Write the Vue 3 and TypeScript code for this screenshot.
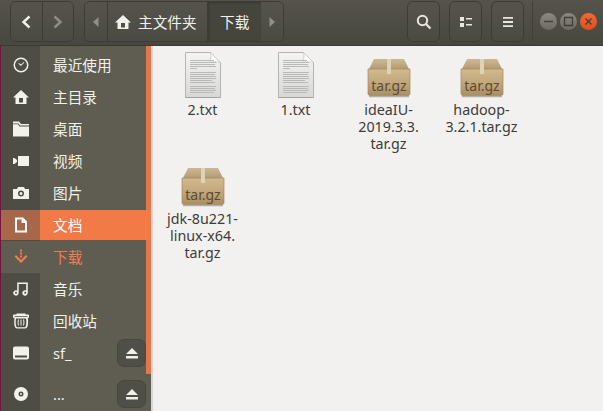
<script setup lang="ts">
interface Place {
  label: string
  icon: string
  state?: 'active' | 'current'
  eject?: boolean
  gap?: boolean
}

interface FileItem {
  kind: 'text' | 'archive'
  lines: string[]
}

const icons: Record<string, string> = {
  clock: 'M8 .5a7.5 7.5 0 1 0 0 15a7.5 7.5 0 0 0 0-15zM8 2a6 6 0 1 1 0 12a6 6 0 0 1 0-12zM8 8.900l3.400-3.300-.6-.6-2.600 2.400-2.400-1.300-.4.7z',
  home: 'M8 1L0 8.500h2.500V15h11V8.500H16zM6 9h4v4.500H6z',
  folder: 'M0 .5h6L8 3h8v1.500H7L5.500 2.500H0zM0 3.200h5L6.500 5.500H16V15.500H0z',
  video: 'M5 3h11v10H5zM0 5h1.500L4 7v2l-2.500 2H0z',
  camera: 'M5 2L4 4H0v10h16V4h-4l-1-2zM8 5.500a3 3 0 1 0 0 6a3 3 0 0 0 0-6zM8 7a1.500 1.500 0 1 1 0 3a1.500 1.500 0 0 1 0-3z',
  doc: 'M2 .5h8l4 4v11H2zM4 2.500v11h8V6H8.500V2.500z',
  down: 'M7 .5h2v2H7zM7 3.500h2v2H7zM7 6.500h2v2H7zM1.500 7.500L3 6l5 5 5-5 1.500 1.500L8 14z',
  music: 'M4.200 1.500h10.600V12h-.1a2.700 2.700 0 1 1-1.500-2.400V3H5.700v9h-.1a2.700 2.700 0 1 1-1.400-2.400zM3 10.800a1 1 0 1 0 0 2a1 1 0 0 0 0-2zM12.200 10.800a1 1 0 1 0 0 2a1 1 0 0 0 0-2z',
  trash: 'M3.500 .5h9v1H15a1 1 0 0 1 1 1v1.500a1 1 0 0 1-1 1h-.2c.2 1 .3 2.500.3 4 0 2-.3 4-.8 5-.3.7-1 1.500-2 1.500H4c-1 0-1.700-.8-2-1.500-.5-1-.8-3-.8-5 0-1.500.1-3 .3-4H1a1 1 0 0 1-1-1V2.500a1 1 0 0 1 1-1h2.500zM1.500 3v.8h13V3zM3 5.500c-.2 1-.3 2.500-.3 3.700 0 2 .3 3.500.7 4.400.2.400.4.6.7.6h7.800c.3 0 .5-.2.700-.6.4-.9.700-2.400.7-4.400 0-1.200-.1-2.700-.3-3.700zM5 6.500c-.3 1-.4 2-.4 3s.1 2 .4 3h1c-.3-1-.4-2-.4-3s.1-2 .4-3zM7.500 6.500v6h1v-6zM10 6.500c.3 1 .4 2 .4 3s-.1 2-.4 3h1c.3-1 .4-2 .4-3s-.1-2-.4-3z',
  drive: 'M2 1.500h12a2 2 0 0 1 2 2v9a2 2 0 0 1-2 2H2a2 2 0 0 1-2-2v-9a2 2 0 0 1 2-2zM2 10.500v2h12v-2z',
  disc: 'M8 1a7 7 0 1 0 0 14A7 7 0 0 0 8 1zM8 5.500a2.500 2.500 0 1 1 0 5a2.500 2.500 0 0 1 0-5zM8 7a1 1 0 1 0 0 2a1 1 0 0 0 0-2z',
}

const places: Place[] = [
  { label: '最近使用', icon: 'clock' },
  { label: '主目录', icon: 'home' },
  { label: '桌面', icon: 'folder' },
  { label: '视频', icon: 'video' },
  { label: '图片', icon: 'camera' },
  { label: '文档', icon: 'doc', state: 'active' },
  { label: '下载', icon: 'down', state: 'current' },
  { label: '音乐', icon: 'music' },
  { label: '回收站', icon: 'trash' },
  { label: 'sf_', icon: 'drive', eject: true },
  { label: '...', icon: 'disc', eject: true, gap: true },
]

const files: FileItem[] = [
  { kind: 'text', lines: ['2.txt'] },
  { kind: 'text', lines: ['1.txt'] },
  { kind: 'archive', lines: ['ideaIU-', '2019.3.3.', 'tar.gz'] },
  { kind: 'archive', lines: ['hadoop-', '3.2.1.tar.gz'] },
  { kind: 'archive', lines: ['jdk-8u221-', 'linux-x64.', 'tar.gz'] },
]

// y position and right end of each grey text line on the document icon
const textLines = [
  [8, 29], [10, 31], [12, 30], [14, 31], [16, 12],
  [20, 31], [22, 30], [24, 31], [26, 31], [28, 27], [30, 30],
  [34, 31], [36, 30], [38, 31], [40, 29],
]
</script>

<template>
  <div class="window">
    <header class="toolbar">
      <div class="group nav">
        <button class="tool nav-btn">
          <svg viewBox="0 0 12 14" width="12" height="14"><path d="M9.500 1.500L3.500 7l6 5.500" class="line bright" /></svg>
        </button>
        <button class="tool nav-btn">
          <svg viewBox="0 0 12 14" width="12" height="14"><path d="M2.500 1.500L8.500 7l-6 5.500" class="line dim" /></svg>
        </button>
      </div>
      <div class="group path">
        <button class="tool arrow">
          <svg viewBox="0 0 8 12" width="8" height="12"><path d="M6.500 1v10L1 6z" fill="#918f86" /></svg>
        </button>
        <button class="tool crumb">
          <svg viewBox="0 0 16 16" width="16" height="16"><path :d="icons.home" fill="#f2f1ec" fill-rule="evenodd" /></svg>
          <span>主文件夹</span>
        </button>
        <button class="tool crumb here"><span>下载</span></button>
        <button class="tool arrow">
          <svg viewBox="0 0 8 12" width="8" height="12"><path d="M1.500 1v10L7 6z" fill="#918f86" /></svg>
        </button>
      </div>
      <div class="spacer"></div>
      <button class="tool square">
        <svg viewBox="0 0 16 16" width="16" height="16"><circle cx="6.500" cy="6.500" r="4.700" fill="none" stroke="#e8e6df" stroke-width="2" /><path d="M10 10l4.500 4.500" stroke="#e8e6df" stroke-width="2.200" /></svg>
      </button>
      <button class="tool square">
        <svg viewBox="0 0 14 12" width="14" height="12"><path d="M1 1h4v4H1zM1 7h4v4H1zM7 2h6v1.600H7zM7 8h6v1.600H7z" fill="#e8e6df" /></svg>
      </button>
      <button class="tool square">
        <svg viewBox="0 0 12 12" width="12" height="12"><path d="M1 1h10v1.800H1zM1 5.100h10v1.800H1zM1 9.200h10V11H1z" fill="#e8e6df" /></svg>
      </button>
      <div class="divider"></div>
      <div class="controls">
        <span class="dot"><svg viewBox="0 0 17 17" width="17" height="17"><path d="M4 8.500h9" stroke="#3f3e39" stroke-width="1.300" /></svg></span>
        <span class="dot"><svg viewBox="0 0 17 17" width="17" height="17"><path d="M4.500 4.500h8v8h-8z" fill="none" stroke="#3f3e39" stroke-width="1.300" /></svg></span>
        <span class="dot close"><svg viewBox="0 0 17 17" width="17" height="17"><path d="M5.500 5.500l6 6M11.500 5.500l-6 6" stroke="#3f3e39" stroke-width="1.400" /></svg></span>
      </div>
    </header>

    <div class="body">
      <aside class="sidebar">
        <div v-for="place in places" :key="place.label" class="place" :class="[place.state, { gap: place.gap }]">
          <span class="place-icon">
            <svg viewBox="0 0 16 16" width="16" height="16">
              <path :d="icons[place.icon]" fill-rule="evenodd" fill="currentColor" />
            </svg>
          </span>
          <span class="place-label">{{ place.label }}</span>
          <button v-if="place.eject" class="eject">
            <svg viewBox="0 0 14 13" width="14" height="13"><path d="M7 1l6 6H1zM1 9h12v2.500H1z" fill="#f0efe8" /></svg>
          </button>
        </div>
        <div class="thumb"></div>
      </aside>

      <main class="files">
        <div v-for="file in files" :key="file.lines.join('')" class="file">
          <div class="file-icon">
            <svg v-if="file.kind === 'text'" viewBox="0 0 36 46" width="36" height="46">
              <defs>
                <linearGradient id="paper" x1="0" y1="0" x2="0" y2="1">
                  <stop offset="0" stop-color="#f4f4f3" />
                  <stop offset="1" stop-color="#d8d8d6" />
                </linearGradient>
              </defs>
              <path d="M.5.500h25l10 10v35H.5z" fill="url(#paper)" stroke="#b4b4b1" />
              <path d="M25.500 .5c1 4 0 8-1 10 3-1 7-1 11 0z" fill="#fafaf9" stroke="#c9c9c6" stroke-width="0.800" />
              <path d="M.5 45.500h35" stroke="#a3a3a0" />
              <g stroke="#b9b9b7" stroke-width="1">
                <path v-for="line in textLines" :key="line[0]" :d="`M5 ${line[0] + 0.5}H${line[1]}`" />
              </g>
            </svg>
            <svg v-else viewBox="0 0 44 40" width="44" height="40">
              <defs>
                <linearGradient id="box" x1="0" y1="0" x2="0" y2="1">
                  <stop offset="0" stop-color="#d2b98f" />
                  <stop offset="0.6" stop-color="#c0a479" />
                  <stop offset="1" stop-color="#a98d63" />
                </linearGradient>
                <linearGradient id="lid" x1="0" y1="0" x2="0" y2="1">
                  <stop offset="0" stop-color="#cdb896" />
                  <stop offset="1" stop-color="#b49b74" />
                </linearGradient>
              </defs>
              <path d="M2 11L7 1h30l5 10z" fill="url(#lid)" />
              <path d="M1 11h42v24.500c0 1.500-1 2-2 2H3c-1 0-2-.5-2-2z" fill="url(#box)" stroke="#a1885f" stroke-width="0.700" />
              <path d="M20 1h4v15h-4z" fill="#e2d2b4" />
              <path d="M2 38.500h40" stroke="#7b7a74" stroke-width="1.400" opacity="0.55" />
              <text x="22" y="33" text-anchor="middle" class="box-text">tar.gz</text>
            </svg>
          </div>
          <div class="file-name">
            <div v-for="line in file.lines" :key="line">{{ line }}</div>
          </div>
        </div>
      </main>
    </div>
  </div>
</template>

<style>
html,
body {
  margin: 0;
  overflow: hidden;
}
</style>

<style scoped>
.window {
  width: 603px;
  height: 411px;
  display: flex;
  flex-direction: column;
  overflow: hidden;
  font-family: 'Noto Sans', 'Noto Sans CJK SC', sans-serif;
  font-size: 14.67px;
  background: #f2f1f0;
}

.toolbar {
  height: 46px;
  box-sizing: border-box;
  flex: none;
  display: flex;
  align-items: flex-start;
  padding: 1px 0 0 10px;
  background: linear-gradient(#55534b, #48473f);
  border-bottom: 1px solid #3a3934;
}

.group {
  display: flex;
  height: 41px;
  box-sizing: border-box;
  border: 1px solid #3c3b36;
  border-radius: 6px;
  overflow: hidden;
}

.nav {
  width: 64px;
}

.path {
  width: 200px;
  margin-left: 10px;
}

.tool {
  border: none;
  padding: 0;
  color: #f2f1ec;
  font: inherit;
  background: linear-gradient(#55534c, #4b4a43);
  display: flex;
  align-items: center;
  justify-content: center;
}

.nav-btn {
  flex: 1;
}

.nav-btn + .nav-btn {
  border-left: 1px solid #3c3b36;
}

.line {
  fill: none;
  stroke-width: 2.400;
}

.bright {
  stroke: #f0efe8;
}

.dim {
  stroke: #8f8d84;
}

.arrow {
  width: 22px;
  flex: none;
}

.crumb {
  gap: 7px;
  border-left: 1px solid #3c3b36;
}

.crumb:nth-child(2) {
  width: 101px;
  justify-content: flex-start;
  padding-left: 7px;
}

.here {
  width: 54px;
  background: #45443d;
  box-shadow: inset 1px 1px 2px #3a3934;
}

.spacer {
  flex: 1;
}

.square {
  width: 33px;
  height: 41px;
  box-sizing: border-box;
  border: 1px solid #3c3b36;
  border-radius: 6px;
  margin-left: 9px;
}

.divider {
  width: 1px;
  height: 40px;
  margin-left: 8px;
  background: #423f3a;
}

.controls {
  display: flex;
  gap: 3px;
  margin: 12px 6px 0 7px;
}

.dot {
  width: 17px;
  height: 17px;
  border-radius: 50%;
  background: linear-gradient(#8a887f, #6c6a62);
  display: flex;
}

.close {
  background: linear-gradient(#f26a30, #df4d20);
}

.body {
  flex: 1;
  display: flex;
  min-height: 0;
}

.sidebar {
  position: relative;
  width: 153px;
  flex: none;
  box-sizing: border-box;
  padding-left: 1px;
  padding-right: 2px;
  background: linear-gradient(to right, #4d4c45 40px, #5f5d52 40px);
  box-shadow: inset 1px 0 0 #6e1642, inset -2px 0 0 #d7d6d3;
  color: #f2f1ea;
}

.place {
  display: flex;
  align-items: center;
  height: 32px;
  position: relative;
}

.place:first-child {
  margin-top: 3px;
}

.gap {
  margin-top: 9px;
}

.place-icon {
  width: 39px;
  height: 100%;
  flex: none;
  display: flex;
  align-items: center;
  justify-content: center;
}

.place-label {
  margin-left: 13px;
  line-height: 1;
}

.active {
  z-index: 1;
  height: 30px;
  margin: 1px 0;
  background: #f27a47;
  color: #fff;
}

.active .place-icon {
  background: #a8674b;
}

.current {
  color: #f47b4a;
}

.current .place-icon {
  background: #5f5d52;
}

.eject {
  position: absolute;
  right: 5px;
  top: 2px;
  width: 29px;
  height: 28px;
  padding: 0;
  border: 1px solid #47463f;
  border-radius: 7px;
  background: #4f4e47;
  display: flex;
  align-items: center;
  justify-content: center;
}

.thumb {
  position: absolute;
  top: 0;
  left: 146px;
  width: 5px;
  height: 328px;
  background: #e0784b;
}

.files {
  flex: 1;
  display: grid;
  grid-template-columns: repeat(4, 93px);
  grid-auto-rows: 103px;
  align-content: start;
  row-gap: 6px;
  padding: 4px 0 0 3px;
}

.file {
  display: flex;
  flex-direction: column;
  align-items: center;
}

.file-icon {
  height: 48px;
  display: flex;
  align-items: flex-end;
  justify-content: center;
}

.file-name {
  margin-top: 3px;
  font-size: 14.3px;
  line-height: 17px;
  color: #3d3c3a;
  text-align: center;
  white-space: nowrap;
}

.box-text {
  font-family: 'Noto Sans', sans-serif;
  font-size: 14px;
  fill: #5c4b31;
}
</style>
